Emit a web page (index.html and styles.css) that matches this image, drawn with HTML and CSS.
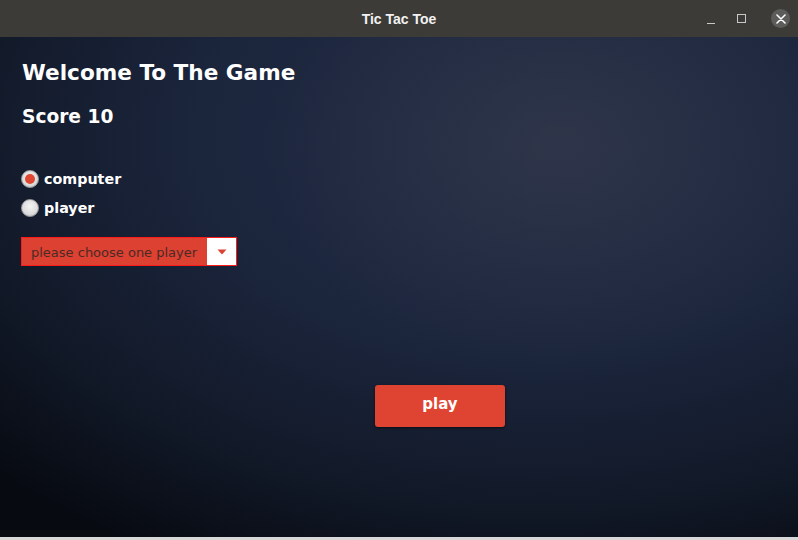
FILE: index.html
```html
<!DOCTYPE html>
<html>
<head>
<meta charset="utf-8">
<link rel="stylesheet" href="styles.css">
</head>
<body>
<div class="window">
  <div class="titlebar">
    <div class="title">Tic Tac Toe</div>
    <div class="controls">
      <span class="ctl min"></span>
      <span class="ctl max"></span>
      <span class="ctl close">
        <svg width="10" height="10" viewBox="0 0 10 10"><path d="M1 1L9 9M9 1L1 9" stroke="#fff" stroke-width="1.6" stroke-linecap="round"/></svg>
      </span>
    </div>
  </div>
  <div class="content">
    <h1 class="welcome">Welcome To The Game</h1>
    <h2 class="score">Score 10</h2>
    <div class="radios">
      <label class="radio"><span class="dot checked"></span>computer</label>
      <label class="radio"><span class="dot"></span>player</label>
    </div>
    <div class="combo">
      <span class="combo-text">please choose one player</span>
      <span class="combo-arrow"><svg width="10" height="6" viewBox="0 0 10 6"><path d="M0.5 0.5H9.5L5 5.5Z" fill="#dc4131"/></svg></span>
    </div>
    <div class="play-row">
      <button class="play">play</button>
    </div>
  </div>
  <div class="bottom-strip"></div>
</div>
</body>
</html>
```
FILE: styles.css
```css
html, body {
  margin: 0;
  padding: 0;
  width: 798px;
  height: 540px;
  overflow: hidden;
}
.window {
  width: 798px;
  height: 540px;
  display: flex;
  flex-direction: column;
  font-family: "DejaVu Sans", sans-serif;
}
.titlebar {
  height: 37px;
  background: #3c3b37;
  display: flex;
  align-items: center;
  justify-content: center;
  position: relative;
  flex: none;
}
.title {
  color: #f2f2f2;
  font-family: "Liberation Sans", sans-serif;
  font-weight: bold;
  font-size: 14px;
  margin-top: 1px;
}
.controls {
  position: absolute;
  right: 8px;
  top: 9px;
  display: flex;
  align-items: center;
  gap: 13px;
}
.ctl {
  display: flex;
  align-items: center;
  justify-content: center;
}
.min {
  width: 8px;
  height: 1px;
  background: #c8c8c8;
  margin-top: 10px;
  margin-right: 9px;
}
.max {
  width: 7px;
  height: 7px;
  border: 1px solid #c8c8c8;
  margin-right: 12px;
}
.close {
  width: 19px;
  height: 19px;
  border-radius: 50%;
  background: #5c5c5a;
}
.content {
  flex: 1;
  background:
    radial-gradient(ellipse 300px 220px at 560px 110px, rgba(58, 62, 78, 0.55) 0%, rgba(58, 62, 78, 0) 100%),
    radial-gradient(ellipse 760px 480px at 540px 100px, #202b44 0%, #1b253c 45%, #121a29 75%, #070a11 100%);
  padding: 0 22px;
  display: flex;
  flex-direction: column;
  color: #fff;
}
.welcome {
  margin: 22px 0 0 0;
  font-size: 21.6px;
  font-weight: bold;
  line-height: 27px;
}
.score {
  margin: 20px 0 0 0;
  font-size: 18.6px;
  font-weight: bold;
  line-height: 22px;
}
.radios {
  margin-top: 41px;
  display: flex;
  flex-direction: column;
  gap: 9px;
}
.radio {
  display: flex;
  align-items: center;
  gap: 5px;
  font-weight: bold;
  font-size: 14.3px;
  line-height: 20px;
  margin-left: -1px;
}
.dot {
  width: 18px;
  height: 18px;
  border-radius: 50%;
  background: radial-gradient(circle at 50% 40%, #f4f4f4 0%, #dcdcdc 60%, #b8b8b8 100%);
  box-sizing: border-box;
  border: 1px solid #9a9a9a;
  display: flex;
  align-items: center;
  justify-content: center;
}
.dot.checked::after {
  content: "";
  width: 10px;
  height: 10px;
  border-radius: 50%;
  background: #e04833;
}
.combo {
  margin-top: 19px;
  margin-left: -1px;
  width: 216px;
  height: 29px;
  box-sizing: border-box;
  border: 1px solid #ff1a1a;
  background: #dc4131;
  display: flex;
  align-items: center;
}
.combo-text {
  flex: 1;
  color: #4b2a26;
  font-size: 13px;
  padding-left: 9px;
  padding-top: 1px;
}
.combo-arrow {
  width: 29px;
  height: 100%;
  background: #fff;
  display: flex;
  align-items: center;
  justify-content: center;
}
.play-row {
  margin-top: 119px;
  padding-left: 353px;
}
.play {
  width: 130px;
  height: 42px;
  border: none;
  border-radius: 3px;
  background: #df4432;
  color: #fff;
  font-family: "DejaVu Sans", sans-serif;
  font-weight: bold;
  font-size: 15px;
  box-shadow: 0 1px 3px rgba(0,0,0,0.6);
  padding: 0 0 4px 0;
}
.bottom-strip {
  height: 3px;
  background: #d8d8d8;
  flex: none;
}
```
